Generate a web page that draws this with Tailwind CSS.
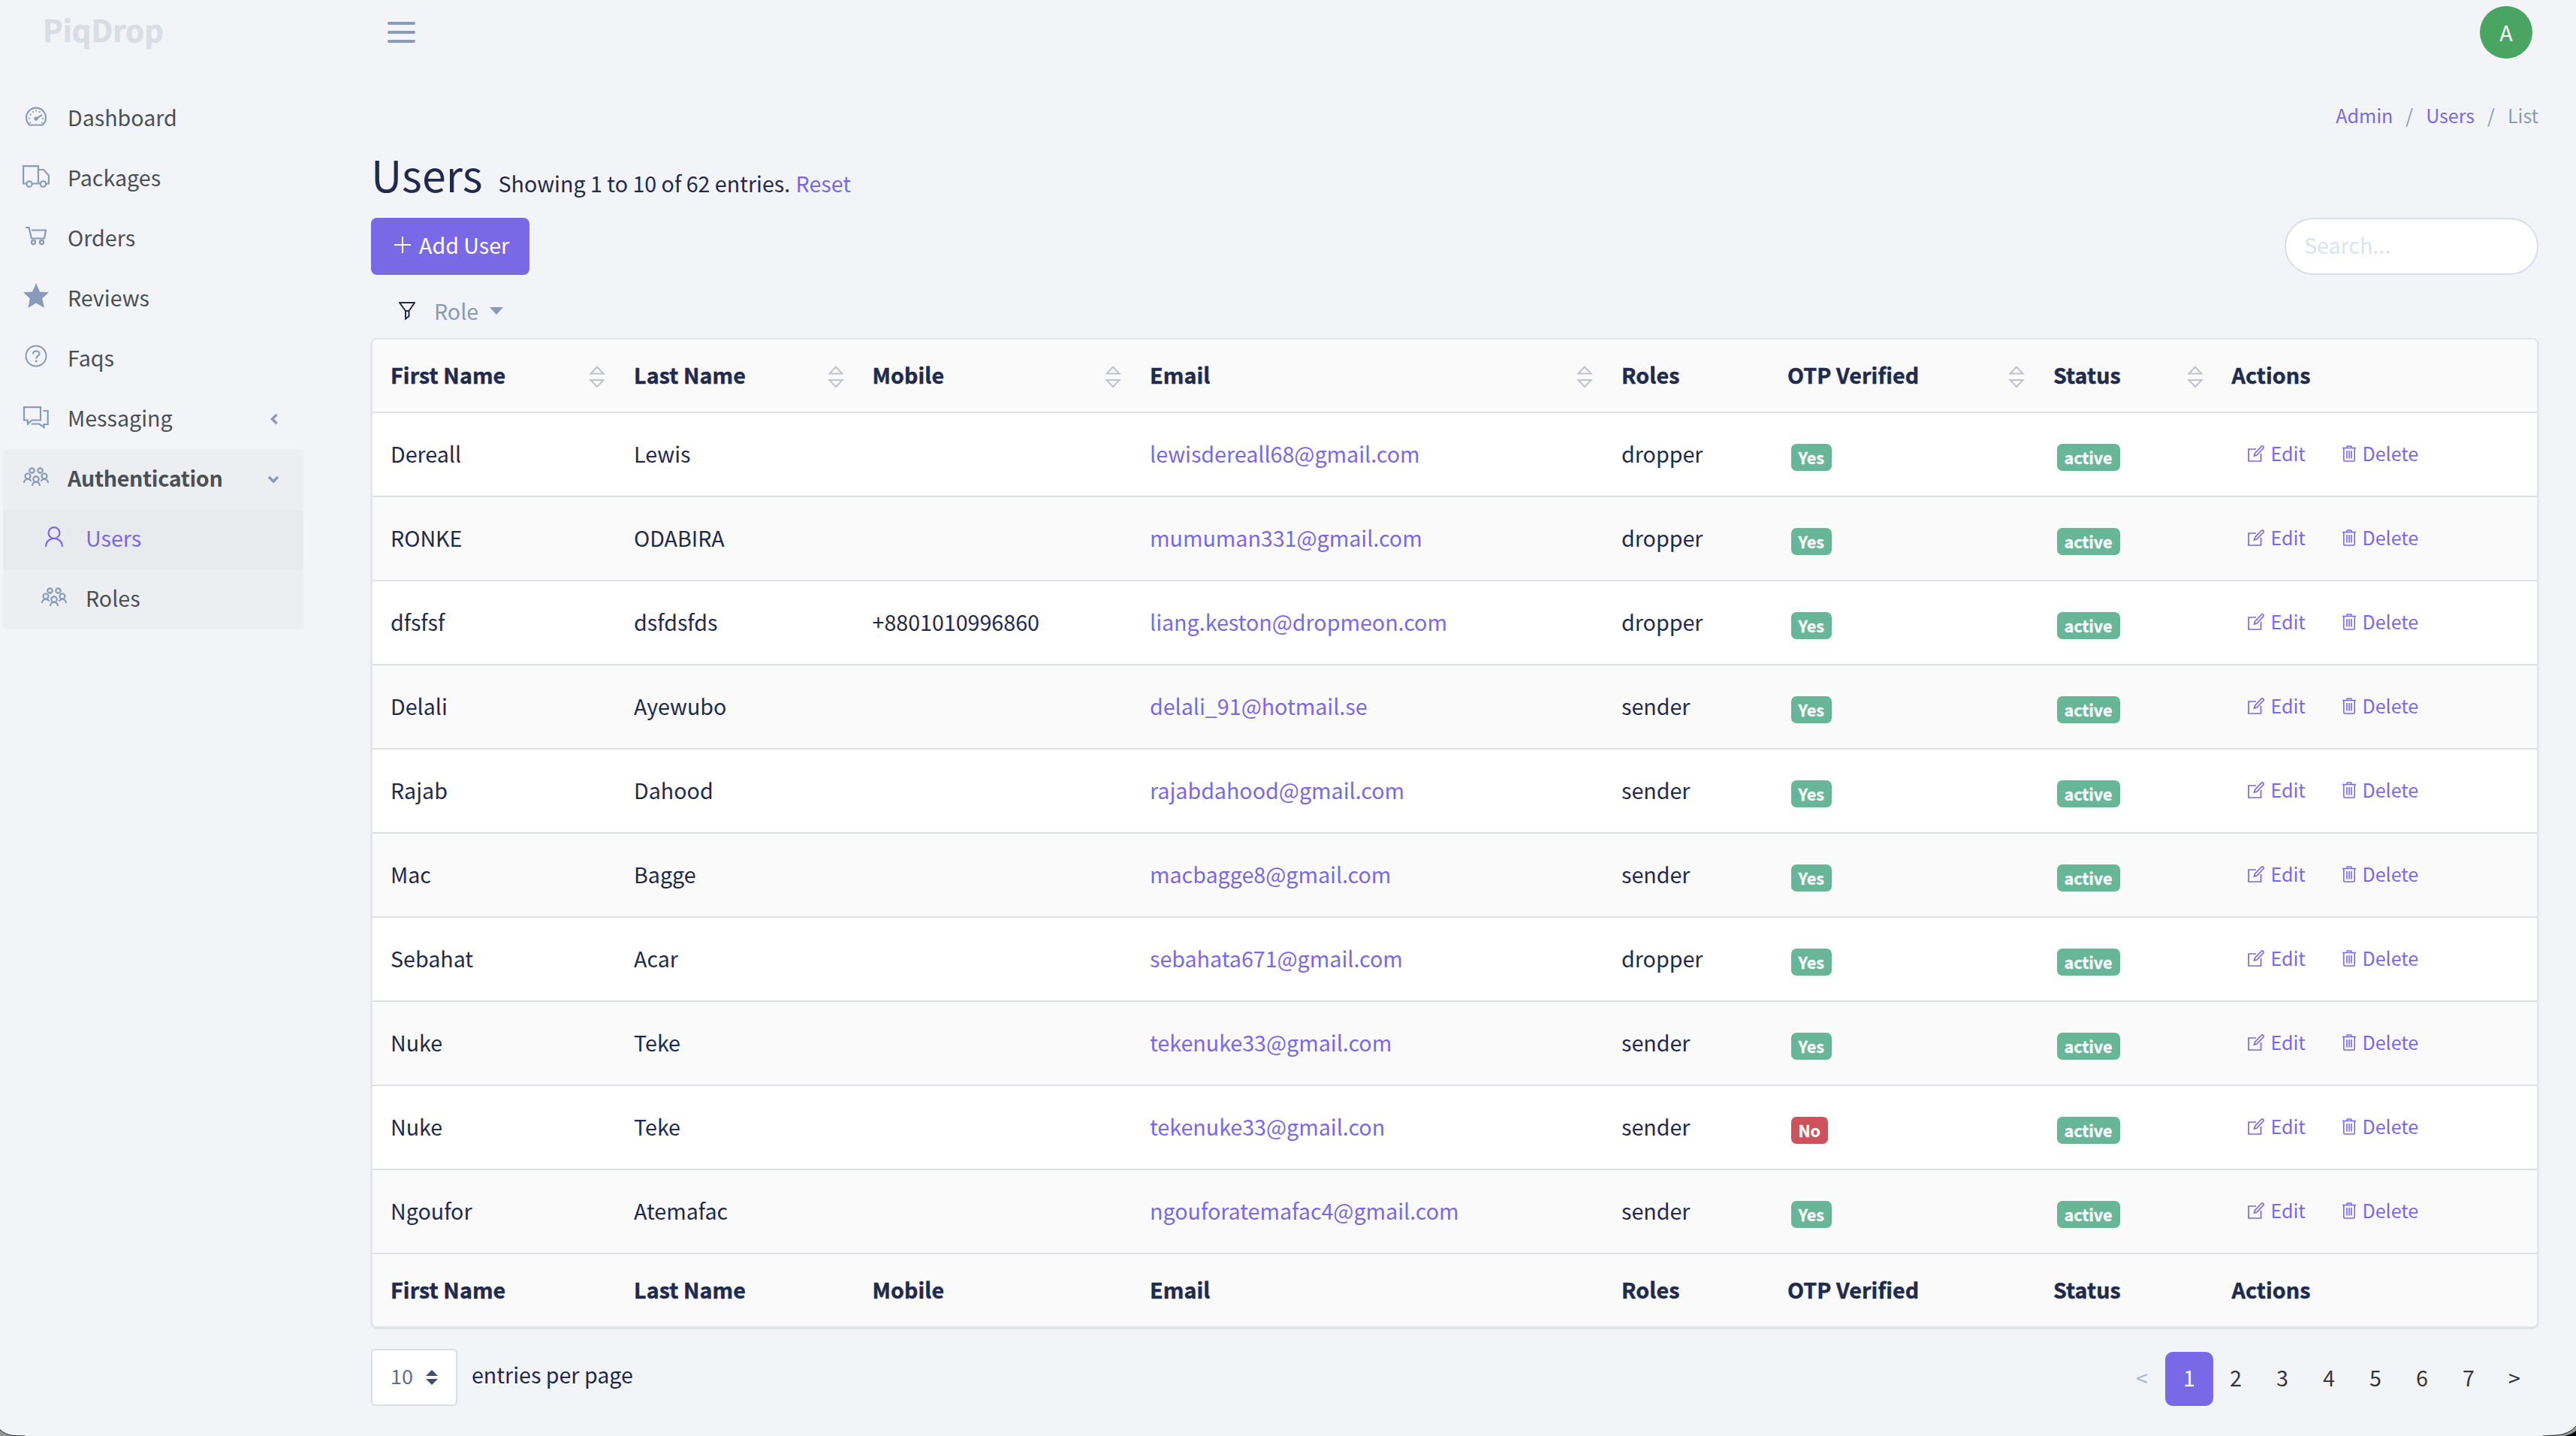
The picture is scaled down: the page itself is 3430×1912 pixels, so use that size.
<!DOCTYPE html>
<html lang="en">
<head>
    <meta charset="UTF-8" />
    <meta name="viewport" content="width=device-width, initial-scale=1.0" />
    <title>Users</title>
    <script src="https://cdn.jsdelivr.net/npm/@tailwindcss/browser@4"></script>
</head>
<body class="bg-[#f3f4f8] text-[#1f2a4d] text-[28.64px] leading-[48px] font-['Noto_Sans_CJK_SC','Noto_Sans',sans-serif] w-[3430px] h-[1912px] overflow-hidden flex">
    <!-- Icons -->
    <svg class="hidden">
        <symbol id="i-speed" viewBox="0 0 36 30">
            <path d="M9.500 26.500A13 13 0 1 1 26.500 26.500Z" fill="none" stroke="currentColor" stroke-width="2.200" />
            <circle cx="18" cy="18" r="2.600" fill="currentColor" />
            <path d="M18 18L26 13" stroke="currentColor" stroke-width="2.200" />
            <path d="M10 23.500h.1M9 17.500h.1M10.500 12.500h.1M14 9h.1M18 7.500h.1M22.500 9h.1M27 18h.1M26 23.500h.1" stroke="currentColor" stroke-width="2.200" stroke-linecap="round" />
        </symbol>
        <symbol id="i-truck" viewBox="0 0 36 30">
            <path d="M5 24.500H1.100V1.100H21V24.500H13M21 6H28L34.900 13.500V24.500H32M23 24.500H21" fill="none" stroke="currentColor" stroke-width="2.200" />
            <circle cx="9" cy="25" r="3.700" fill="none" stroke="currentColor" stroke-width="2.200" />
            <circle cx="27.500" cy="25" r="3.700" fill="none" stroke="currentColor" stroke-width="2.200" />
        </symbol>
        <symbol id="i-cart" viewBox="0 0 36 30">
            <path d="M4 3H8.500L12 17.500H29L31 6.500H12" fill="none" stroke="currentColor" stroke-width="2.200" />
            <circle cx="14.500" cy="22.500" r="2.600" fill="none" stroke="currentColor" stroke-width="2.200" />
            <circle cx="25.500" cy="22.500" r="2.600" fill="none" stroke="currentColor" stroke-width="2.200" />
        </symbol>
        <symbol id="i-star" viewBox="0 0 34 33">
            <path d="M17 0L22 11.500L34 12.300L25.200 20.500L28 33L17 26.500L6.500 33L8.800 20.500L0 12.300L12 11.500Z" fill="currentColor" />
        </symbol>
        <symbol id="i-question" viewBox="0 0 36 30">
            <circle cx="18" cy="15" r="13.500" fill="none" stroke="currentColor" stroke-width="2" />
            <path d="M14 12.500C14 7 22.500 7.500 22.500 12C22.500 15 18.200 15 18.200 18.500" fill="none" stroke="currentColor" stroke-width="2.200" />
            <circle cx="18.200" cy="21.800" r="1.500" fill="currentColor" />
        </symbol>
        <symbol id="i-chat" viewBox="0 0 36 30">
            <path d="M2 1.100H24V18.500H12.500L7 23.500V18.500H2Z" fill="none" stroke="currentColor" stroke-width="2.200" />
            <path d="M27.500 6H33.700V24H28.500V28L22.500 23.500H12" fill="none" stroke="currentColor" stroke-width="2.200" />
        </symbol>
        <symbol id="i-people" viewBox="0 0 36 30">
            <g fill="none" stroke="currentColor" stroke-width="2.200">
                <circle cx="12.500" cy="6.500" r="3.200" />
                <circle cx="23.500" cy="6.500" r="3.200" />
                <circle cx="7" cy="14" r="3.500" />
                <circle cx="29" cy="14" r="3.500" />
                <circle cx="18" cy="18" r="3.700" />
                <path d="M2 23C2 20.500 3.500 18 7 18C9.500 18 11 19.500 11.500 20.500M34 23C34 20.500 32.500 18 29 18C26.500 18 25 19.500 24.500 20.500M13 27C13 24 15 22 18 22S23 24 23 27" />
            </g>
        </symbol>
        <symbol id="i-user" viewBox="0 0 24 27">
            <circle cx="12" cy="8.500" r="7.400" fill="none" stroke="currentColor" stroke-width="2.200" />
            <path d="M1.100 27C1.100 20 6 16 12 16S22.900 20 22.900 27" fill="none" stroke="currentColor" stroke-width="2.200" />
        </symbol>
        <symbol id="i-sort" viewBox="0 0 22 30">
            <path d="M2.500 10.500L11 1.500L19.500 10.500ZM2.500 19L11 28L19.500 19Z" fill="none" stroke="#c0c2cc" stroke-width="2" />
        </symbol>
        <symbol id="i-edit" viewBox="0 0 22 22">
            <path d="M11 5H1V21H17.500V11" fill="none" stroke="currentColor" stroke-width="1.700" />
            <path d="M8.500 14L9.500 10.500L18 1.500C19.500 0 22 2 20.500 4L12 13Z" fill="none" stroke="currentColor" stroke-width="1.700" />
        </symbol>
        <symbol id="i-trash" viewBox="0 0 18 22">
            <path d="M0 3.500H18M5.500 3.500L6.500 1H11.500L12.500 3.500M1.800 3.500V19.500Q1.800 21 3.300 21H14.700Q16.200 21 16.200 19.500V3.500M6 7V17.500M9 7V17.500M12 7V17.500" fill="none" stroke="currentColor" stroke-width="1.600" />
        </symbol>
    </svg>

    <!-- Sidebar -->
    <aside class="w-[404px] pl-1 flex flex-col shrink-0 text-[#4a5055]">
        <div class="h-[118px] pl-[53px] pt-[15px] text-[40px] font-bold text-[#dadde4] [-webkit-text-stroke:0.6px]">PiqDrop</div>
        <nav>
            <a class="h-20 pb-[5px] flex items-center"><svg class="w-9 h-[30px] ml-[26px] mr-6 -mt-px text-[#8a9aba]"><use href="#i-speed" /></svg>Dashboard</a>
            <a class="h-20 pb-[5px] flex items-center"><svg class="w-9 h-[30px] ml-[26px] mr-6 -mt-px text-[#8a9aba]"><use href="#i-truck" /></svg>Packages</a>
            <a class="h-20 pb-[5px] flex items-center"><svg class="w-9 h-[30px] ml-[26px] mr-6 -mt-px text-[#8a9aba]"><use href="#i-cart" /></svg>Orders</a>
            <a class="h-20 pb-[5px] flex items-center"><svg class="w-9 h-[33px] ml-[26px] mr-6 -mt-[5px] text-[#8a9aba]"><use href="#i-star" /></svg>Reviews</a>
            <a class="h-20 pb-[5px] flex items-center"><svg class="w-9 h-[30px] ml-[26px] mr-6 -mt-[3px] text-[#8a9aba]"><use href="#i-question" /></svg>Faqs</a>
            <a class="h-20 pb-[5px] flex items-center"><svg class="w-9 h-[30px] ml-[26px] mr-6 mt-px text-[#8a9aba]"><use href="#i-chat" /></svg>Messaging
                <svg class="w-4 h-4 ml-auto mr-[31px] mt-1 text-[#8a9aba]" viewBox="0 0 16 16"><path d="M11.500 2L5.500 8L11.500 14" fill="none" stroke="currentColor" stroke-width="3.500" /></svg>
            </a>
            <div class="bg-[#edeef2] rounded-md">
                <a class="h-20 pb-[5px] flex items-center font-bold tracking-[-0.3px]"><svg class="w-9 h-[30px] ml-[26px] mr-6 -mt-px text-[#8a9aba]"><use href="#i-people" /></svg>Authentication
                    <svg class="w-4 h-4 ml-auto mr-8 mt-1 text-[#8a9aba]" viewBox="0 0 16 16"><path d="M2 5L8 11L14 5" fill="none" stroke="currentColor" stroke-width="3.500" /></svg>
                </a>
                <a class="h-20 pb-[5px] flex items-center bg-[#e9eaed] rounded-md text-[#7a69e6]"><svg class="w-6 h-[27px] ml-14 mr-[30px] -mt-[3px]"><use href="#i-user" /></svg>Users</a>
                <a class="h-20 pb-[5px] flex items-center"><svg class="w-9 h-[30px] ml-[50px] mr-6 -mt-px text-[#8a9aba]"><use href="#i-people" /></svg>Roles</a>
            </div>
        </nav>
    </aside>

    <!-- Main content -->
    <main class="flex-1 pl-[90px] pr-[50px]">
        <header class="h-[86px] flex items-center justify-between pl-[22px] pr-2">
            <svg class="w-[37px] h-7" viewBox="0 0 37 28"><path d="M2 2H35M2 14H35M2 26H35" stroke="#8a9aba" stroke-width="4" stroke-linecap="round" /></svg>
            <div class="size-[70px] rounded-full bg-[#4ba562] text-white flex items-center justify-center">A</div>
        </header>
        <div class="h-[110px] pt-[43px] flex justify-end text-[25.06px] text-[#8a9aba]">
            <span class="text-[#7a69e6]">Admin</span><span class="px-[17px]">/</span><span class="text-[#7a69e6]">Users</span><span class="px-[17px]">/</span><span>List</span>
        </div>
        <div class="h-[94px] flex items-baseline pt-0.5">
            <h1 class="text-[57.3px] leading-[68px] mr-[21px]">Users</h1>
            <p>Showing 1 to 10 of 62 entries. <a class="ml-px text-[#7a69e6]">Reset</a></p>
        </div>
        <div class="h-[76px] flex justify-between">
            <button class="w-[211px] bg-[#7a69e6] text-white rounded-lg flex items-center pl-[31px] pb-[5px]">
                <svg class="w-[22px] h-[22px] mr-[11px] mt-px" viewBox="0 0 22 22"><path d="M0 11H22M11 0V22" stroke="currentColor" stroke-width="2" /></svg>Add User
            </button>
            <div class="w-[338px] rounded-full bg-white border-2 border-[#d9deea] pl-6 pb-1 flex items-center text-[#dae3f0]">Search...</div>
        </div>
        <div class="h-[84px] pl-[37px] pt-6 flex text-[#8a9aba]">
            <svg class="w-[22px] h-6 mt-3 mr-[25px]" viewBox="0 0 22 24"><path d="M1 1H21L13.500 12V19L9 22.500V12ZM9 12H13.500" fill="none" stroke="#1f2a4d" stroke-width="2" /></svg>
            Role
            <svg class="w-[18px] h-[10px] mt-[19px] ml-[15px]" viewBox="0 0 18 10"><path d="M0 0H18L9 10Z" fill="currentColor" /></svg>
        </div>

        <!-- Users table -->
        <section class="bg-white border-2 border-[#e1e6eb] rounded-lg overflow-hidden shadow-sm">
            <div id="head" class="grid grid-cols-[324px_317.5px_369.5px_628px_221px_354px_237.500px_1fr] h-24 items-center bg-[#fafafa] font-bold tracking-[0.1px] [-webkit-text-stroke:0.5px]"></div>
            <div id="rows"></div>
            <div id="foot" class="grid grid-cols-[324px_317.5px_369.5px_628px_221px_354px_237.500px_1fr] h-[98px] items-center bg-[#fafafa] font-bold tracking-[0.1px] [-webkit-text-stroke:0.5px] border-t-2 border-[#dde2e6]"></div>
        </section>

        <footer class="pt-7 flex justify-between">
            <div class="flex">
                <div class="w-[115px] h-[76px] bg-white border-2 border-[#d8deea] rounded-md flex items-center pl-6 pb-[5px] text-[27px] text-[#5f6f96]">10
                    <svg class="w-4 h-5 ml-[17px] mt-[5px]" viewBox="0 0 16 20"><path d="M0 8L8 0L16 8ZM0 12L8 20L16 12Z" fill="#3f4e75" /></svg>
                </div>
                <span class="ml-[19px] pt-[10px]">entries per page</span>
            </div>
            <div class="flex mt-1 h-[72px] text-[#363636]">
                <span class="w-[62px] pb-[5px] flex items-center justify-center text-[#aab8cf]">&lt;</span>
                <span class="w-16 pb-[5px] flex items-center justify-center rounded-[10px] bg-[#7a69e6] text-white">1</span>
                <span class="w-[62px] pb-[5px] -ml-px flex items-center justify-center">2</span>
                <span class="w-[62px] pb-[5px] flex items-center justify-center">3</span>
                <span class="w-[62px] pb-[5px] flex items-center justify-center">4</span>
                <span class="w-[62px] pb-[5px] flex items-center justify-center">5</span>
                <span class="w-[62px] pb-[5px] flex items-center justify-center">6</span>
                <span class="w-[62px] pb-[5px] flex items-center justify-center">7</span>
                <span class="w-[62px] pb-[5px] pr-0.5 flex items-center justify-center">&gt;</span>
            </div>
        </footer>
    </main>

    <!-- Window corners -->
    <svg class="absolute left-0 bottom-0 w-10 h-2.5" viewBox="0 0 40 10">
        <path d="M0 1.500Q6 8 18 9.500L34 10H0Z" fill="#999" />
        <path d="M0 1.500Q6 8 18 9.500L34 10" fill="none" stroke="#222" stroke-width="1" />
    </svg>
    <svg class="absolute right-0 bottom-0 w-12 h-4" viewBox="0 0 48 16">
        <path d="M48 3Q38 14 22 15L0 16H48Z" fill="#999" />
        <path d="M48 9Q42 14 32 16H48Z" fill="#000" />
        <path d="M48 3Q38 14 22 15L4 16" fill="none" stroke="#222" stroke-width="1" />
    </svg>

    <script>
        const columns = ["First Name", "Last Name", "Mobile", "Email", "Roles", "OTP Verified", "Status", "Actions"];
        const users = [
            ["Dereall", "Lewis", "", "lewisdereall68@gmail.com", "dropper", "Yes"],
            ["RONKE", "ODABIRA", "", "mumuman331@gmail.com", "dropper", "Yes"],
            ["dfsfsf", "dsfdsfds", "+8801010996860", "liang.keston@dropmeon.com", "dropper", "Yes"],
            ["Delali", "Ayewubo", "", "delali_91@hotmail.se", "sender", "Yes"],
            ["Rajab", "Dahood", "", "rajabdahood@gmail.com", "sender", "Yes"],
            ["Mac", "Bagge", "", "macbagge8@gmail.com", "sender", "Yes"],
            ["Sebahat", "Acar", "", "sebahata671@gmail.com", "dropper", "Yes"],
            ["Nuke", "Teke", "", "tekenuke33@gmail.com", "sender", "Yes"],
            ["Nuke", "Teke", "", "tekenuke33@gmail.con", "sender", "No"],
            ["Ngoufor", "Atemafac", "", "ngouforatemafac4@gmail.com", "sender", "Yes"]
        ];
        const noSort = ["Roles", "Actions"];

        function cell(i, html) {
            return `<div class="pl-6 pb-[3px] flex items-center justify-between">${html}</div>`;
        }

        document.getElementById("head").innerHTML = columns.map((c, i) =>
            cell(i, `<span>${c}</span>` + (noSort.includes(c) ? "" : `<svg class="w-[22px] h-[30px] mr-[14px] mt-1.5"><use href="#i-sort" /></svg>`))
        ).join("");
        document.getElementById("foot").innerHTML = columns.map((c, i) => cell(i, `<span>${c}</span>`)).join("");

        document.getElementById("rows").innerHTML = users.map((u, n) => `
            <div class="grid grid-cols-[324px_317.5px_369.5px_628px_221px_354px_237.500px_1fr] h-28 items-center border-t-2 border-[#dde2e6] ${n % 2 ? "bg-[#fafafa]" : "bg-white"}">
                ${cell(0, u[0])}${cell(1, u[1])}${cell(2, u[2])}
                ${cell(3, `<a class="text-[#7a69e6]">${u[3]}</a>`)}
                ${cell(4, u[4])}
                ${cell(5, `<span class="ml-[4.5px] mt-[11px] h-9 pb-px px-2.5 rounded-[7px] flex items-center text-white text-[21.5px] font-bold [-webkit-text-stroke:0.3px] ${u[5] === "Yes" ? "bg-[#68b698]" : "bg-[#cd525c]"}">${u[5]}</span>`)}
                ${cell(6, `<span class="ml-[4.5px] mt-[11px] h-9 pb-px px-2.5 rounded-[7px] flex items-center text-white text-[21.5px] font-bold [-webkit-text-stroke:0.3px] bg-[#68b698]">active</span>`)}
                <div class="pl-[45px] pb-1 flex items-center text-[25px] text-[#7a69e6]">
                    <svg class="w-[22px] h-[22px] mr-[9px] mt-px"><use href="#i-edit" /></svg><span class="w-[95px]">Edit</span>
                    <svg class="w-[18px] h-[22px] mr-[9px] mt-px"><use href="#i-trash" /></svg>Delete
                </div>
            </div>`).join("");
    </script>
</body>
</html>
